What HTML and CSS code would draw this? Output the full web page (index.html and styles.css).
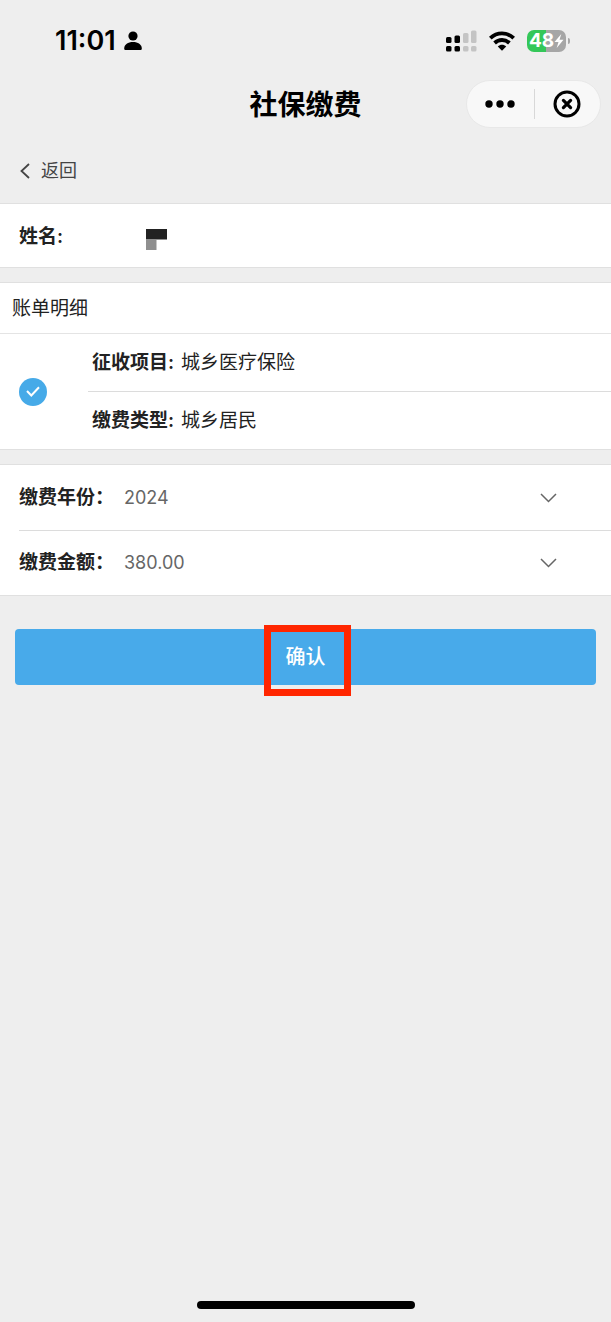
FILE: index.html
```html
<!DOCTYPE html>
<html lang="zh-CN">
<head>
<meta charset="utf-8">
<meta name="viewport" content="width=device-width, initial-scale=1">
<title>社保缴费</title>
<link rel="stylesheet" href="styles.css">
</head>
<body>
<div class="status">
  <div class="status-left">
    <span class="time">11:01</span>
    <svg width="18" height="20" viewBox="0 0 18 20" aria-hidden="true"><circle cx="9" cy="5" r="4.600"/><path d="M0.200 17.500C0.200 13.700 4 11.100 9 11.100s8.800 2.600 8.800 6.400c0 1-.6 1.600-1.600 1.600H1.800C.8 19.100.2 18.500.2 17.500z"/></svg>
  </div>
  <div class="status-right">
    <svg width="31" height="22" viewBox="0 0 31 22" aria-hidden="true"><g><rect x="0" y="7" width="5.500" height="6" rx="1.500"/><rect x="8.500" y="5.500" width="5.500" height="7.500" rx="1.500"/><rect x="0" y="16" width="5.500" height="5.500" rx="1.500"/><rect x="8.500" y="16" width="5.500" height="5.500" rx="1.500"/></g><g fill="#c4c4c4"><rect x="17" y="3" width="5.500" height="10" rx="1.500"/><rect x="25" y="0.500" width="5.500" height="12.500" rx="1.500"/><rect x="17" y="16" width="5.500" height="5.500" rx="1.500"/><rect x="25" y="16" width="5.500" height="5.500" rx="1.500"/></g></svg>
    <svg class="wifi" width="26" height="20" viewBox="0 0 26 20" aria-hidden="true"><g fill="none" stroke="#000" stroke-width="3.800"><path d="M1.300 7.200C8 .7 18 .7 24.700 7.200"/><path d="M5.600 12c4.200-4 10.600-4 14.800 0"/></g><path d="M8.800 15.400c2.400-2.200 6-2.200 8.400 0L13 19.700z"/></svg>
    <div class="battery"><span>48</span><svg width="10" height="14" viewBox="0 0 9 14" aria-hidden="true"><path fill="#fff" d="M6.800 0L0 8h4L2.200 14 9 5.800H5z"/></svg></div>
  </div>
</div>
<header class="nav">
  <h1 class="title">社保缴费</h1>
  <div class="capsule">
    <button class="cap-btn" aria-label="更多"><svg width="30" height="8" viewBox="0 0 30 8"><circle cx="4" cy="4" r="3.700"/><circle cx="15" cy="4" r="3.700"/><circle cx="26" cy="4" r="3.700"/></svg></button>
    <button class="cap-btn" aria-label="关闭"><svg width="28" height="28" viewBox="0 0 28 28" fill="none" stroke="#000" stroke-width="3" stroke-linecap="round"><circle cx="14" cy="14" r="12"/><path d="M10.400 10.400l7.200 7.200M17.600 10.400l-7.200 7.200" stroke-width="3.200"/></svg></button>
  </div>
</header>
<a class="back" href="#"><svg width="10" height="16" viewBox="0 0 10 16" fill="none" stroke="#444" stroke-width="1.800"><path d="M9 1L1.500 8 9 15"/></svg>返回</a>
<main>
  <section class="card name">
    <span class="label">姓名:</span>
    <svg width="21" height="21" viewBox="0 0 21 21" aria-hidden="true"><path fill="#222" d="M0 0h21v10.500H0z"/><path fill="#8f8f8f" d="M0 10.500h10.500V21H0z"/></svg>
  </section>
  <section class="card">
    <h2 class="heading">账单明细</h2>
    <div class="bill">
      <label class="tick"><input type="checkbox" checked aria-label="选择账单"><svg width="14" height="11" viewBox="0 0 14 11" fill="none" stroke="#fff" stroke-width="2" aria-hidden="true"><path d="M1 5l4.300 4.500L13 1.200"/></svg></label>
      <div class="details">
        <p class="detail"><span class="label">征收项目:</span><span>城乡医疗保险</span></p>
        <p class="detail"><span class="label">缴费类型:</span><span>城乡居民</span></p>
      </div>
    </div>
  </section>
  <section class="card fields">
    <div class="field">
      <label class="label" for="year">缴费年份：</label>
      <select id="year"><option>2024</option></select>
      <svg class="chevron" width="17" height="10" viewBox="0 0 17 10" aria-hidden="true"><path d="M1 1l7.500 7.500L16 1"/></svg>
    </div>
    <div class="field">
      <label class="label" for="amount">缴费金额：</label>
      <select id="amount"><option>380.00</option></select>
      <svg class="chevron" width="17" height="10" viewBox="0 0 17 10" aria-hidden="true"><path d="M1 1l7.500 7.500L16 1"/></svg>
    </div>
  </section>
  <div class="action">
    <button class="confirm">确认</button>
    <span class="marker"></span>
  </div>
</main>
<div class="home"></div>
</body>
</html>
```
FILE: styles.css
```css
* { box-sizing: border-box; }
body {
  margin: 0;
  min-height: 100vh;
  display: flex;
  flex-direction: column;
  background: #eee;
  color: #222;
  font: 19px/28px Inter, "Noto Sans CJK SC", sans-serif;
}
svg { display: block; flex: none; }
h1, h2, p { margin: 0; }
button { border: 0; font: inherit; }

.status {
  display: flex;
  justify-content: space-between;
  align-items: center;
  height: 80px;
  padding: 2px 41px 0 55px;
  color: #000;
}
.status-left, .status-right { display: flex; align-items: center; }
.status-left { gap: 8px; }
.status-right { gap: 12px; }
.time { font-size: 27px; font-weight: 600; }
.battery {
  position: relative;
  display: flex;
  align-items: center;
  justify-content: center;
  width: 39px;
  height: 22px;
  margin-right: 4px;
  border-radius: 7px;
  background: linear-gradient(90deg, #34c759 49%, #a6a6a6 49%);
  color: #fff;
  font-size: 19px;
  font-weight: 700;
}
.battery::after {
  content: "";
  position: absolute;
  left: 41px;
  top: 8px;
  width: 2px;
  height: 6px;
  border-radius: 0 2px 2px 0;
  background: #a6a6a6;
}

.nav {
  display: grid;
  grid-template-columns: 1fr auto 1fr;
  align-items: center;
  height: 48px;
  padding: 0 10px;
}
.title {
  grid-column: 2;
  padding-top: 2px;
  color: #000;
  font-size: 28px;
  font-weight: 700;
  line-height: 40px;
}
.capsule {
  justify-self: end;
  display: flex;
  width: 135px;
  height: 48px;
  border: 1px solid #e8e8e8;
  border-radius: 24px;
  background: #f8f8f8;
}
.cap-btn {
  position: relative;
  flex: 1;
  display: flex;
  align-items: center;
  justify-content: center;
  padding: 0;
  background: none;
}
.cap-btn + .cap-btn::before {
  content: "";
  position: absolute;
  left: 0;
  top: 8px;
  bottom: 8px;
  width: 1px;
  background: #d8d8d8;
}

.back {
  display: flex;
  align-items: center;
  gap: 11px;
  height: 75px;
  padding: 10px 20px 0;
  color: #444;
  font-size: 18px;
  text-decoration: none;
}

main { display: flex; flex-direction: column; gap: 14px; }
.card {
  border-top: 1px solid #e0e0e0;
  border-bottom: 1px solid #e0e0e0;
  background: #fff;
}
.label { color: #222; font-weight: 600; }
.name {
  display: flex;
  align-items: center;
  gap: 83px;
  height: 65px;
  padding: 2px 19px 0;
}
.name svg { margin-top: 6px; }
.heading {
  padding: 12px 12px 10px;
  border-bottom: 1px solid #e4e4e4;
  font-size: 19px;
  font-weight: 400;
}
.bill { display: flex; }
.tick {
  display: grid;
  place-items: center;
  width: 28px;
  margin: 0 41px 0 19px;
}
.tick > * { grid-area: 1 / 1; }
.tick input {
  appearance: none;
  width: 28px;
  height: 28px;
  margin: 0;
  border-radius: 50%;
  background: #46aae8;
}
.tick svg { position: relative; }
.details { flex: 1; }
.detail {
  display: flex;
  gap: 7px;
  padding: 15px 4px 14px;
}
.detail + .detail { border-top: 1px solid #dcdcdc; }

.fields { padding-left: 19px; }
.field {
  display: flex;
  align-items: center;
  height: 65px;
  padding-right: 54px;
}
.field + .field { border-top: 1px solid #dcdcdc; }
.field .label { width: 105px; white-space: nowrap; }
.field select {
  flex: 1;
  appearance: none;
  height: 40px;
  padding: 0;
  border: 0;
  background: none;
  color: #666;
  font: inherit;
  font-size: 18px;
}
.chevron { fill: none; stroke: #666; stroke-width: 1.5; }

.action { position: relative; margin: 19px 15px 0; }
.confirm {
  display: block;
  width: 100%;
  height: 56px;
  border-radius: 4px;
  background: #48aaea;
  color: #fff;
  font-size: 20px;
  font-weight: 500;
}
.marker {
  position: absolute;
  top: -4px;
  left: calc(50% - 42px);
  width: 87px;
  height: 71px;
  border: 7px solid #ff2600;
  pointer-events: none;
}
.home {
  align-self: center;
  width: 218px;
  height: 8px;
  margin: auto 0 13px;
  border-radius: 4px;
  background: #000;
}
```
